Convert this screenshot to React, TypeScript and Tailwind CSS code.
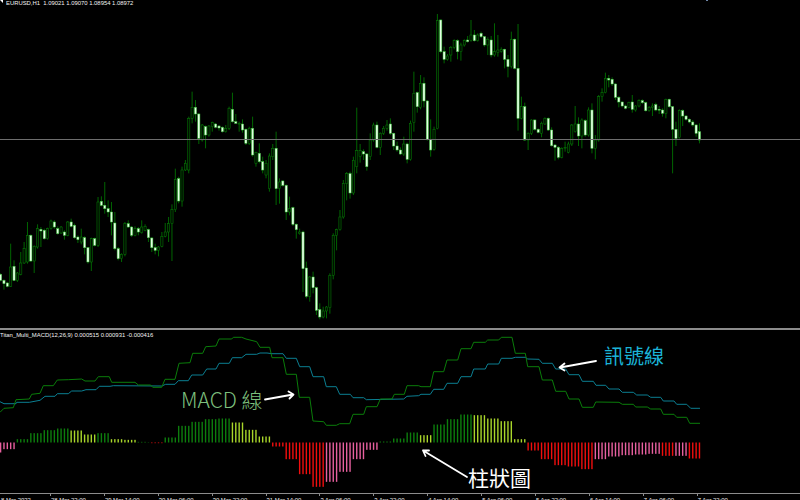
import React from "react";

// candles: kind top,bottom,wickTop,wickBottom  (values are 3x zoom coords, base shifts the lower half)
const seg = (base: number, s: string) =>
  s.trim().split(/\s+/).map((c) => {
    const [t, b, wt, wb] = c.slice(1).split(",").map((v) => (v === "" ? NaN : Number(v)));
    return { up: c[0] === "u", t: (t + base) / 3, b: (b + base) / 3, wt: (wt + base) / 3, wb: (wb + base) / 3 };
  });

const candles = [
  ...seg(501, `d322,340 d340,350,,368 d348,358 u300,358,230,360 d298,340,280,342 u318,340,,345 u288,322,255,325 u245,288,225
  u205,285,165,290 d205,282 u238,282,,318 u185,240,172,245 d187,192,180,240 d190,215,185,218 u185,215 u162,185,158 d165,180,160,185
  d185,200,178 u180,198 d195,205,190,218 u165,205 d165,178,155 d175,212,170,215 d210,218,205,228 u210,225,185,232 d212,242,208,262
  d242,285,240,290 u215,285,,312 d215,235 u105,235,90,240 d103,115,88 d115,125,45,140 d125,135,100,150 d135,165,105,205 d168,245,135,250
  d245,275,240,280 u262,275,,285 u170,262,165,268 d170,180,160 d180,205,,210 u185,205,178 d185,195,180,205 u180,197,160 u178,190,172
  d188,212,185,225 d213,242,,255 d242,250,230,262 u240,250,,268 u208,238,195 u195,208,168 u170,195,150,225 u128,170,112,282 u38,128,5,135`),
  ...seg(0, `d536,603,530,610 u510,603,500,620 u490,510,480 u355,510,350,520 u322,355,275,370 d322,342,300,365 d342,415,,432 u375,420,372,425
  d380,405,,445 u378,405,375,410 u368,380,365,395 d372,382 d378,384,,392 d382,395,,398 u385,395,375,398 u325,385,320,390 d328,365,278,368
  d365,370,342,372 u370,372,365,395 d372,390,358,398 d388,430,,435 u385,430,380,435 d385,465,350,470 u458,490,455,500 d460,485,430,490`),
  ...seg(0, `d485,510,470,520 u490,525,480,535`),
  ...seg(0, `u468,566,460,575 u445,470,432,480 d445,566,395,615 u546,566,535,611 d543,556,540,560 d556,636,,660 u626,636,590,646 d623,673,620,678
  d673,689,,716 u696,701,686,704 d696,806,692,876 d804,889,785,895 u831,889,,905 d831,863,815,880 d863,931,,945 d929,951,910,958 u933,951,920,955
  u921,933,918,955 u826,923,820,941 u706,826,700,838 u689,706,,751 u651,689,630,692 u551,651,540,656 u521,551,516,601 d521,579,515,596 u481,579,470,585`),
  ...seg(0, `u452,500,323,520 u452,470,432,488 d455,462,448,480 d462,500,,512 u420,470,400,480 u375,420,368,425 d375,442,365,445 u400,442,,465
  u385,400,378,405 u375,385,360,392 d372,400,355,405 d400,438,398,450 d438,450,425,455 d450,462,442,465 u432,462,410,468 d432,478,428,490
  u370,478,362,482 u280,368,215,395 d278,320,275,338 u250,322,225,328 d250,303,232,322 d303,418,300,422 d418,450,358,470 u388,448,380,452
  u62,386,42,388 d60,155,58,160 d155,178,140,190 u168,178,162,182 u142,165,138,185 u122,142,118,148 d122,155,118,178 u135,155,128,182
  u122,135,118,140 d120,125,108,128 u105,122,60,125 d105,122,90,125 u105,122,100,125 d100,110,95,114 d110,135,108,140 u118,135,112,165
  d120,165,108,172 u155,165,70,170 u150,158,105,170 u148,155,142,158 d148,178,146,205 d178,200,165,232 u118,200,95,205 d118,205,115,208`),
  ...seg(0, `d205,355,72,392 u320,355,290,358 d320,420,308,423 u400,420,,450 u360,400,358,405`),
  ...seg(0, `d360,388,358,392 d388,397,385,400 u370,400,365,412 u355,372,352,375 d355,390,352,393 d390,437,382,440 d435,442,432,482 d442,472,438,478
  u445,472,442,475 u442,444,425,455 u432,457,425,460 u375,432,372,438 u372,395,318,398 d372,408,352,438 u360,408,355,445 d362,405,358,410
  u330,405,322,410 d330,445,310,460 u420,445,405,478 u290,420,285,425 u278,290,265,305 u235,278,218,280 d235,240,225,262 d238,252,232,258
  d252,292,250,300 d292,306,288,322 d306,318,304,322 d318,325,314,328 u308,322,305,325 d306,328,285,338 u318,330,315,335 u302,318,298,322
  d302,308,298,312 d308,332,305,335 u322,332,318,335 u318,322,310,348 d314,330,308,334 d328,330,318,342 d330,340,325,350 u298,340,296,355
  d298,320,296,323 d320,388,318,520 d388,415,365,438 u332,413,328,416 d332,348,328,378 d348,358,345,362 d358,366,355,370 d366,375,360,380
  d375,400,372,410 d395,420,370,430`),
];

const step = 3.36;
const xAt = (i: number) => 0.6 + i * step;

const G = "#0d7d0d";
const Y = "#a9d62a";
const R = "#f00e0e";
const P = "#e8609f";

// histogram runs: count, height in zoom px (negative goes down), colour
const runs: [number, number, string][] = [
  [1, -30, P], [4, -20, P], [4, 10, G], [4, 28, G], [4, 37, G], [4, 42, G], [4, 36, Y], [4, 24, Y], [4, 28, G], [4, 10, Y], [4, 8, Y],
  [3, 2, G], [1, 1, G], [4, -2, R], [4, 15, G], [4, 50, G], [4, 62, G], [4, 70, G], [4, 72, G], [4, 60, Y], [4, 38, Y], [4, 18, Y],
  [4, -12, R], [4, -50, R], [4, -95, R], [4, -133, R], [4, -118, P], [4, -88, P], [4, -50, P], [4, -22, P], [4, 3, G], [4, 12, G],
  [4, 30, G], [4, 22, Y], [4, 54, G], [4, 70, G], [4, 84, G], [4, 82, Y], [4, 72, Y], [4, 64, Y], [4, 10, Y], [4, -24, R],
  [4, -50, R], [4, -68, R], [4, -72, R], [4, -80, R], [4, -50, P], [4, -42, P], [4, -38, P], [4, -36, P], [4, -34, P], [4, -40, R],
  [4, -40, P], [4, -48, R],
];
const bars = runs.flatMap(([n, h, c]) => Array.from({ length: n }, () => ({ h, c })));

const line = (ox: number, s: string) =>
  s.split(";").map((p) => {
    const [x, y] = p.split(",").map(Number);
    return `${(ox + x / 3).toFixed(1)},${(325 + y / 3).toFixed(1)}`;
  }).join(" ");

const macd = [
  line(0, "0,262;12,250;40,248;48,224;88,222;95,208;120,205;130,182;160,182;172,165;205,164;245,162;255,168;285,168;295,155;328,155;335,172;405,172;415,180;452,180;458,187;485,187;495,163;525,163;537,115;570,113;578,85;608,85;617,65;648,63;657,42;695,42;700,37;725,37;738,42;770,50;780,67;801,67"),
  line(267, "8,67;15,98;48,98;58,148;88,148;97,217;128,217;138,288;170,290;178,301;208,301;218,296;248,296;258,268;290,268;298,245;330,245;340,222;375,222;382,208;412,208;420,182;455,182;462,185;490,185;500,140;530,140;540,105;572,105;582,71;612,71;620,52;655,52;662,45;695,45;703,37;735,37;745,85;775,85;782,125"),
  line(534, "15,125;25,165;55,165;65,199;95,199;105,222;135,222;145,247;178,247;185,231;255,232;265,238;298,238;305,246;340,246;350,252;380,252;388,268;420,268;428,277;458,277;467,295;498,295"),
].join(" ");

const signal = [
  line(0, "0,230;12,236;48,236;50,232;88,232;120,226;135,214;165,214;172,206;205,206;215,198;245,198;258,194;288,194;298,184;330,184;340,182;485,183;497,178;525,178;535,167;565,167;575,150;608,150;620,132;648,132;657,115;688,115;697,98;725,98;738,88;770,88;780,84;801,84"),
  line(267, "15,86;48,86;58,100;88,100;98,125;128,125;138,155;170,155;178,185;208,185;218,208;250,208;258,218;290,218;298,224;410,222;420,214;455,212;462,208;490,208;500,193;530,193;540,175;572,175;582,155;612,155;620,132;655,132;662,117;695,117;703,100;735,100;745,97;775,97;782,102"),
  line(534, "15,103;25,115;55,115;65,132;95,132;105,149;135,149;145,169;178,169;186,181;215,181;225,192;255,192;265,202;298,202;308,210;340,210;350,217;380,217;388,228;420,228;428,238;458,238;470,250;498,250"),
].join(" ");

const ticks = ["28 Mar 22:00", "29 Mar 14:00", "30 Mar 06:00", "30 Mar 22:00", "31 Mar 14:00", "3 Apr 06:00", "3 Apr 22:00", "4 Apr 14:00", "5 Apr 06:00", "5 Apr 22:00", "6 Apr 14:00", "7 Apr 06:00", "7 Apr 22:00"];

const Candles = () => (
  <svg viewBox="0 0 800 328" className="block w-[800px] h-[328px]">
    {candles.map((c, i) => {
      const x = xAt(i);
      return (
        <g key={i}>
          <line x1={x} x2={x} y1={isNaN(c.wt) ? c.t - 1 : c.wt} y2={isNaN(c.wb) ? c.b + 1 : c.wb} stroke="#007000" strokeWidth={0.9} />
          <rect x={x - 1.1} width={2.2} y={c.t} height={Math.max(c.b - c.t, 0.8)} fill={c.up ? "#001000" : "#e2ffe2"} stroke={c.up ? "#058005" : "#3cc43c"} strokeWidth={0.5} />
        </g>
      );
    })}
  </svg>
);

const Macd = () => (
  <svg viewBox="0 330 800 163" className="block w-[800px] h-[163px]">
    {bars.map((b, i) => {
      const h = Math.abs(b.h) / 3;
      return <rect key={i} x={xAt(i) - 0.7} width={1.4} y={b.h > 0 ? 442.5 - h : 442.5} height={h} fill={b.c} />;
    })}
    <polyline points={signal} fill="none" stroke="#0b7f92" strokeWidth={1} />
    <polyline points={macd} fill="none" stroke="#0a7d0a" strokeWidth={1} />
    {/* arrows added on the screenshot */}
    <g fill="none" stroke="#fff" strokeWidth={1.8} strokeLinecap="round" strokeLinejoin="round">
      <path d="M265 399.5 L293 394.5 M288.5 391.5 L293.5 394.5 L289.5 398.5" />
      <path d="M596 361 L560 367.5 M564.5 363.5 L559.5 367.5 L564.5 370.5" />
      <path d="M467 477 L423 450.5 M429 450.5 L423 450.5 L425.5 456" />
    </g>
  </svg>
);

export default function App() {
  return (
    <div className="w-[800px] h-[500px] bg-black overflow-hidden flex flex-col text-[5.9px] leading-[6px] text-[#f2f2f2] font-['Liberation_Sans',sans-serif]">
      {/* price window */}
      <div className="relative h-[328px]">
        <Candles />
        <div className="absolute left-0 right-0 top-[139px] h-px bg-[#6e6e6e]" />
        <div className="absolute left-0 top-0 w-0 h-0 border-l-[3px] border-l-transparent border-t-[3px] border-t-white" />
        <div className="absolute left-[706px] top-0 w-[2px] h-px bg-[#6f86a8]" />
        <p className="absolute left-[6px] top-0 whitespace-pre">EURUSD,H1  1.09021 1.09070 1.08954 1.08972</p>
      </div>
      <div className="h-[2px] bg-[#8c8c8c]" />

      {/* indicator window */}
      <div className="relative h-[163px]">
        <Macd />
        <p className="absolute left-0 top-[2px] whitespace-pre">Titan_Multi_MACD(12,26,9) 0.000515 0.000931 -0.000416</p>
        <p className="absolute left-[181px] top-[55px] text-[21px] leading-[28px] font-light text-[#7cbf7c] font-['Noto_Sans_CJK_TC',sans-serif] whitespace-pre">MACD 線</p>
        <p className="absolute left-[604px] top-[12px] text-[20px] leading-[28px] text-[#1bb3d6] font-['Noto_Sans_CJK_TC',sans-serif]">訊號線</p>
        <p className="absolute left-[468px] top-[133px] text-[21px] leading-[28px] text-white font-['Noto_Sans_CJK_TC',sans-serif]">柱狀圖</p>
      </div>

      {/* time axis */}
      <div className="h-[7px] border-t border-[#8c8c8c] flex overflow-hidden whitespace-pre">
        <div className="w-[50px] shrink-0 pl-[1px] pt-[3px]">8 Mar 2022</div>
        {ticks.map((t) => (
          <div key={t} className="relative w-[53.9px] shrink-0 pl-[1px] pt-[3px]">
            <div className="absolute left-0 top-0 w-px h-[2px] bg-[#8c8c8c]" />
            {t}
          </div>
        ))}
      </div>
    </div>
  );
}
